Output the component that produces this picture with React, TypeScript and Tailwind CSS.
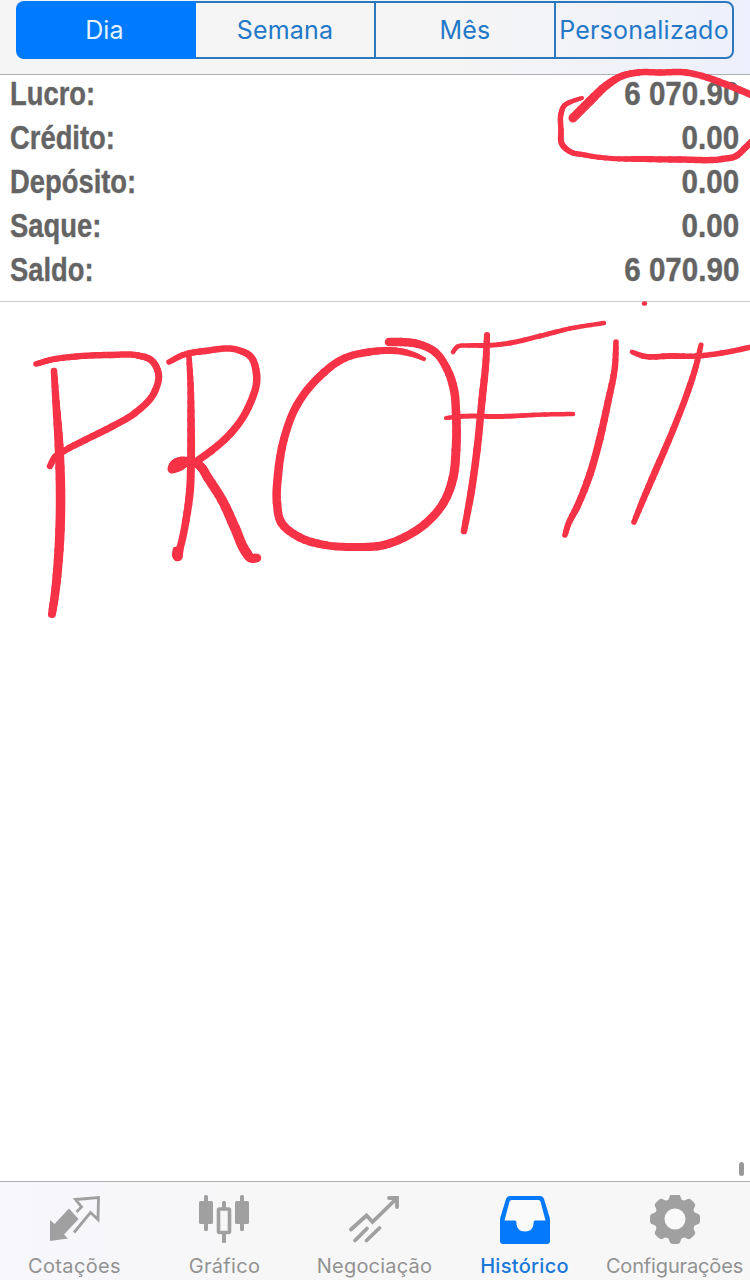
import type { ReactNode } from "react";

type InkPoint = [x: number, y: number, width: number];

const periods = [
  {
    label: "Dia",
    className: "w-[180px] rounded-l-[8px] bg-[#007aff] pr-[3px] text-[#e4f4ff]",
  },
  {
    label: "Semana",
    className: "w-[178px] border-y-2 border-[#2b78bd]",
  },
  {
    label: "Mês",
    className: "w-[180px] border-y-2 border-l-2 border-[#2b78bd]",
  },
  {
    label: "Personalizado",
    className: "w-[180px] rounded-r-[8px] border-2 border-[#2b78bd]",
  },
];

const summary = [
  { label: "Lucro:", value: "6 070.90" },
  { label: "Crédito:", value: "0.00" },
  { label: "Depósito:", value: "0.00" },
  { label: "Saque:", value: "0.00" },
  { label: "Saldo:", value: "6 070.90" },
];

// freehand pen strokes, each point carries the pen width
const strokes: InkPoint[][] = [
  // ring round the profit
  [[573, 118, 9], [590, 101, 9], [607, 85, 8], [622, 76, 7], [638, 72.5, 6.5], [660, 72.5, 6.5], [686, 72.5, 6.5], [702, 76, 6.5], [725, 84, 7], [740, 90, 7], [756, 97, 7]],
  [[582, 98, 4], [573, 101, 4.5], [564, 106, 5], [561, 114, 5.5], [561, 130, 5.5], [562, 144, 6], [569, 151, 5.5], [585, 155, 5.2], [612, 158.5, 5], [640, 159, 6], [680, 159.5, 6.5], [722, 159, 6.5], [736, 156, 6.5], [745, 148, 6.5], [755, 138, 6.5]],
  [[644, 303.5, 4.5], [645, 303.5, 4.5]],
  // P
  [[54, 371, 6.5], [56, 402, 7.5], [59, 445, 9], [60.5, 490, 9.5], [60, 530, 9.5], [57.5, 570, 9], [55, 594, 8.5], [52, 614, 8]],
  [[36, 364, 5.5], [50, 360, 6], [76, 356.5, 6.3], [110, 355, 6.5], [138, 355.5, 6.5], [151, 360, 6.8], [158.5, 374, 7], [155, 391, 7], [135, 413, 7], [113, 426, 7], [85, 440, 6.8], [64, 451, 6.5], [55, 457, 6.5], [50, 466, 6.5]],
  // R
  [[189, 357, 5.5], [190.5, 384, 6.5], [191, 420, 7.5], [191, 460, 8], [190, 490, 8], [186, 520, 7.5], [180, 548, 7.5], [177, 557, 8], [176, 550, 6.5]],
  [[169, 362, 5.5], [183, 355, 6], [205, 351, 6.5], [238, 350, 6.5], [250, 356, 7], [256.5, 374, 7.5], [248, 408, 7.5], [231, 433, 7.5], [211, 451, 7.5], [194, 463, 7.5]],
  [[172, 469, 9], [179, 467, 8.5], [190, 461, 8], [200, 466, 9], [208, 478, 9.3], [222, 500, 9.5], [235, 528, 10], [246, 552, 10], [251, 558, 9], [257, 558, 8.5]],
  [[190, 461, 7.5], [181, 460.5, 7.5], [174, 464, 8], [172, 468, 8.5]],
  // O
  [[389, 342, 8.5], [401, 342, 8.5], [418, 344, 8], [435, 352, 8], [447, 369, 8], [454, 390, 8.5], [456, 412, 8.5], [456, 450, 9], [453, 478, 9], [444, 502, 8.5], [425, 524, 8.5], [405, 537, 8.5], [384, 545, 8.5], [355, 547, 8], [325, 545, 8], [299, 537, 8.3], [281, 522, 8.5], [277, 503, 8.5], [278, 475, 8.5], [284, 439, 8], [297, 405, 8], [318, 378, 8], [345, 358, 7.5], [369, 352, 7.5], [404, 352, 6.5], [416, 355.5, 5], [424, 359, 4]],
  // F
  [[487, 335, 6], [486, 360, 7], [482, 400, 7.5], [477, 450, 7.5], [471, 493, 7.5], [464, 531, 6.5]],
  [[453, 352, 4.5], [457, 347, 4.5], [469, 345.5, 4.5], [487, 345.5, 5], [510, 343, 5], [540, 336, 5], [570, 328.5, 4.5], [604, 323, 4.5]],
  [[446, 418, 4], [460, 416.5, 5], [500, 416.5, 5], [545, 414.5, 4.5], [573, 414, 4.5]],
  // I
  [[616, 342, 5.5], [615, 366, 6.3], [608, 402, 7], [600, 438, 7.5], [590, 474, 7.5], [577, 507, 7], [568, 525, 6], [565, 535, 5.5]],
  // T
  [[701, 345, 5], [696, 366, 6], [688, 391, 6.5], [673, 430, 6.5], [655, 472, 7], [643, 500, 6.5], [634, 522, 5.5]],
  [[632, 352, 4.5], [643, 356, 5.5], [670, 356, 6], [697, 356, 5.5], [722, 353, 5.5], [756, 346, 5.5]],
];

// tangent at a point; the shorter neighbour segment counts for more
function tangent(points: InkPoint[], i: number) {
  const prev = points[i - 1] ?? points[i];
  const next = points[i + 1] ?? points[i];
  const [x, y] = points[i];
  const before = Math.hypot(x - prev[0], y - prev[1]);
  const after = Math.hypot(next[0] - x, next[1] - y);
  const a = before ? 1 / (before * before) : 0;
  const b = after ? 1 / (after * after) : 0;
  const dx = (x - prev[0]) * a + (next[0] - x) * b;
  const dy = (y - prev[1]) * a + (next[1] - y) * b;
  const length = Math.hypot(dx, dy) || 1;
  return [dx / length, dy / length];
}

function bezier(a: number, b: number, c: number, d: number, t: number) {
  const u = 1 - t;
  return u * u * u * a + 3 * u * u * t * b + 3 * u * t * t * c + t * t * t * d;
}

const CHUNKS = 4;
const STEPS = 4;

// cut one segment into short runs so the width changes gradually
function runs(points: InkPoint[], i: number) {
  const [x1, y1, w1] = points[i];
  const [x2, y2, w2] = points[i + 1];
  const [dx1, dy1] = tangent(points, i);
  const [dx2, dy2] = tangent(points, i + 1);
  const pull = Math.hypot(x2 - x1, y2 - y1) / 3;
  const at = (t: number) =>
    bezier(x1, x1 + dx1 * pull, x2 - dx2 * pull, x2, t).toFixed(2) +
    "," +
    bezier(y1, y1 + dy1 * pull, y2 - dy2 * pull, y2, t).toFixed(2);

  const count = w1 === w2 ? 1 : CHUNKS;
  const steps = (CHUNKS * STEPS) / count;
  return Array.from({ length: count }, (_, c) => ({
    width: w1 + ((w2 - w1) * (c + 0.5)) / count,
    points: Array.from({ length: steps + 1 }, (_, s) =>
      at((c + s / steps) / count)
    ).join(" "),
  }));
}

function Ink() {
  return (
    <svg
      className="absolute left-0 top-0 pointer-events-none"
      width="750"
      height="640"
      viewBox="0 0 750 640"
      fill="none"
      stroke="#f63246"
      strokeLinecap="round"
      strokeLinejoin="round"
      aria-label="PROFIT"
    >
      {strokes.map((points, i) => (
        <g key={i}>
          {points
            .slice(1)
            .flatMap((_, j) => runs(points, j))
            .map((run, j) => (
              <polyline key={j} points={run.points} strokeWidth={run.width} />
            ))}
        </g>
      ))}
    </svg>
  );
}

function QuotesIcon() {
  return (
    <svg width="52" height="52" viewBox="0 0 52 52">
      <path d="M1 25l4.5 4L20 13.500 29.500 24 15 39.500l4 4-18 2.500z" fill="#a0a0a0" />
      <path
        d="M27.500 17l5-5-6-7.500 23-2-.5 22-7.500-7L25 37.500"
        fill="none"
        stroke="#a0a0a0"
        strokeWidth="2.8"
      />
    </svg>
  );
}

function ChartIcon() {
  return (
    <svg width="52" height="52" viewBox="0 0 52 52" fill="#a0a0a0">
      <rect x="0" y="6" width="14" height="23" rx="1.5" />
      <rect x="5" y="0" width="4" height="36" rx="1.5" />
      <rect x="36" y="6" width="14" height="23" rx="1.5" />
      <rect x="41" y="0" width="4" height="36" rx="1.5" />
      <rect x="23" y="6" width="4" height="9" rx="1.5" />
      <rect x="23" y="37" width="4" height="11" rx="1.5" />
      <rect x="19.5" y="14" width="11" height="23.5" rx="1" fill="none" stroke="#a0a0a0" strokeWidth="3.6" />
    </svg>
  );
}

function TradeIcon() {
  return (
    <svg
      width="52"
      height="52"
      viewBox="0 0 52 52"
      fill="none"
      stroke="#a0a0a0"
      strokeWidth="3.8"
      strokeLinecap="round"
    >
      <path d="M2 34.500L17.500 20.500l6 6.500L47 4" />
      <path d="M40 3h8v9" />
      <path d="M6 45.500l12-12M17.500 45.500l13-12.500" />
    </svg>
  );
}

function HistoryIcon() {
  return (
    <svg width="52" height="52" viewBox="0 0 52 52">
      <path
        d="M11 1h30q3 0 4 3l5.500 18q.5 2 .5 4v20q0 3-3 3H4q-3 0-3-3V26q0-2 .5-4L7 4q1-3 4-3z"
        fill="#0579fb"
      />
      <path
        d="M12.500 5h27q1.500 0 2 1.500L46.500 25.500H36q-1.500 0-1.500 2.500c0 5-3 8.500-8.500 8.500S17.500 33 17.500 28q0-2.500-1.500-2.500H5.500L10.500 6.500q.5-1.500 2-1.500z"
        fill="#fafafa"
      />
    </svg>
  );
}

function SettingsIcon() {
  return (
    <svg width="52" height="52" viewBox="0 0 52 52">
      <g fill="#a0a0a0">
        <circle cx="26" cy="24" r="20" />
        {[0, 45, 90, 135, 180, 225, 270, 315].map((angle) => (
          <path
            key={angle}
            d="M17 6q3-1 3.500-4 .5-3 3.500-3h4q3 0 3.500 3 .5 3 3.500 4z"
            transform={`rotate(${angle} 26 24)`}
          />
        ))}
      </g>
      <circle cx="26" cy="24" r="10.5" fill="#fafafa" />
    </svg>
  );
}

const tabs: { label: string; icon: ReactNode; className: string }[] = [
  { label: "Cotações", icon: <QuotesIcon />, className: "text-[#929292] tracking-[0.35px]" },
  { label: "Gráfico", icon: <ChartIcon />, className: "text-[#929292] tracking-[0.3px]" },
  { label: "Negociação", icon: <TradeIcon />, className: "text-[#929292] tracking-[0.2px]" },
  { label: "Histórico", icon: <HistoryIcon />, className: "text-[#1b78d8] font-medium tracking-[0.3px]" },
  { label: "Configurações", icon: <SettingsIcon />, className: "text-[#929292] tracking-[-0.15px]" },
];

function App() {
  return (
    <div className="relative flex h-[1280px] w-[750px] flex-col overflow-hidden bg-white font-['Inter',sans-serif]">
      <header className="h-[75px] border-b border-[#b0b0b2] bg-linear-to-r from-[#f5f5f5] from-60% to-[#edf0fc] px-4 pt-px">
        <div className="flex h-[58px] text-[25px] tracking-[0.2px] text-[#2478c8]">
          {periods.map(({ label, className }) => (
            <button
              key={label}
              className={`flex shrink-0 items-center justify-center pt-0.5 ${className}`}
            >
              {label}
            </button>
          ))}
        </div>
      </header>

      <section className="h-[227px] border-b border-[#cacaca] px-[10px]">
        {summary.map(({ label, value }) => (
          <div
            key={label}
            className="flex h-11 items-start justify-between font-['Liberation_Sans',sans-serif] text-[34px] font-bold leading-[36px] text-[#646464] [-webkit-text-stroke:0.4px_#646464]"
          >
            <span className="origin-left scale-x-[0.805]">{label}</span>
            <span className="-mr-px origin-right -translate-x-0.5 scale-x-[0.87]">{value}</span>
          </div>
        ))}
      </section>

      <main className="flex flex-1 items-end justify-end pb-[5px] pr-[6px]">
        <div className="h-[14px] w-[5px] rounded-full bg-[#999999]" />
      </main>

      <nav className="flex h-[99px] border-t border-[#b0b0b2] bg-linear-to-r from-[#f7f7fc] to-[#f7f7f7] to-40%">
        {tabs.map(({ label, icon, className }) => (
          <a
            key={label}
            className={`flex w-[150px] flex-col items-center pt-[13px] text-[20px] leading-6 ${className}`}
          >
            {icon}
            <span className="mt-[7px] whitespace-nowrap pr-px">{label}</span>
          </a>
        ))}
      </nav>

      <Ink />
    </div>
  );
}

export default App;
